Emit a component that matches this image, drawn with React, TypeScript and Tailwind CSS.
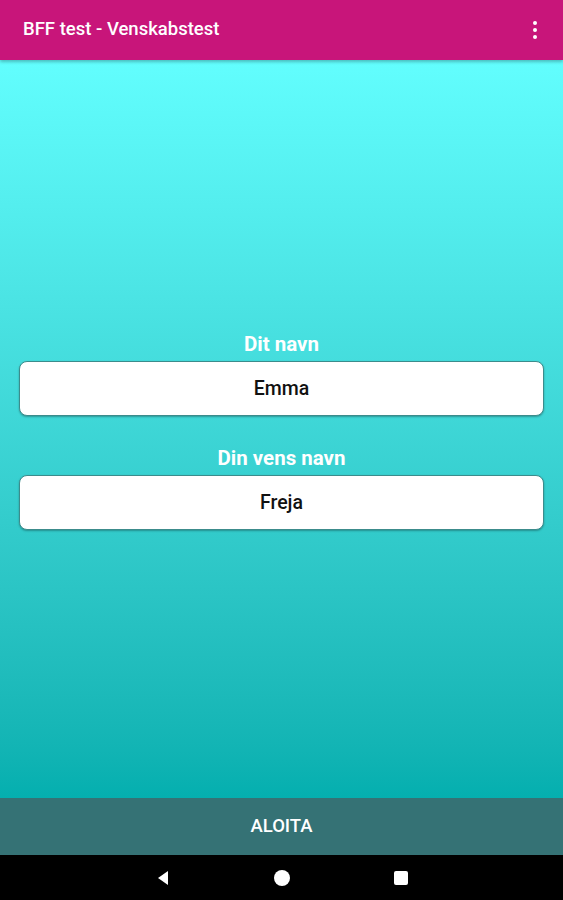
import React from 'react'

const Field = ({ label, value }: { label: string; value: string }) => (
    <div className="flex flex-col items-center">
        <label className="text-white text-[20.5px] font-bold leading-[24px] mb-[5px]">{label}</label>
        <div className="w-full h-[55px] bg-white rounded-[8px] border border-[#3c8c8c] shadow-[0_1px_2px_rgba(0,0,0,0.3)] flex items-center justify-center text-[19.5px] font-medium text-[#111]">
            {value}
        </div>
    </div>
)

const App = () => {
    return (
        <div className="w-[563px] h-[900px] flex flex-col" style={{ fontFamily: 'Roboto, "Liberation Sans", sans-serif' }}>
            <header className="h-[60px] bg-[#c8157a] flex items-center justify-between pl-[23px] pr-[26px] shadow-[0_2px_3px_rgba(0,0,0,0.25)] relative z-10">
                <h1 className="text-white text-[18.5px] font-medium">BFF test - Venskabstest</h1>
                <div className="flex flex-col gap-[3px] items-center">
                    <span className="w-[4px] h-[4px] rounded-full bg-white" />
                    <span className="w-[4px] h-[4px] rounded-full bg-white" />
                    <span className="w-[4px] h-[4px] rounded-full bg-white" />
                </div>
            </header>

            <main className="flex-1 bg-gradient-to-b from-[#62fefe] to-[#04afaf] flex flex-col justify-center px-[19px] gap-[30px] pt-[4px]">
                <Field label="Dit navn" value="Emma" />
                <Field label="Din vens navn" value="Freja" />
            </main>

            <button className="h-[57px] bg-[#357275] text-white text-[18.5px] font-medium flex items-center justify-center">
                ALOITA
            </button>

            <nav className="h-[45px] bg-black flex items-center justify-center gap-[104px]">
                <svg width="14" height="16" viewBox="0 0 14 16"><path d="M12 1 L2 8 L12 15 Z" fill="white" /></svg>
                <span className="w-[16px] h-[16px] rounded-full bg-white" />
                <span className="w-[14px] h-[14px] rounded-[2px] bg-white" />
            </nav>
        </div>
    )
}

export default App
